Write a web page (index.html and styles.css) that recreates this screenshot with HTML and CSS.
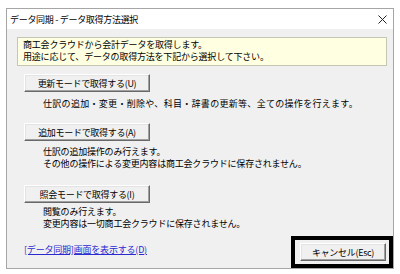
FILE: index.html
```html
<!DOCTYPE html>
<html lang="ja">
<head>
    <meta charset="UTF-8">
    <meta name="viewport" content="width=device-width, initial-scale=1.0">
    <title>データ同期 - データ取得方法選択</title>
    <link rel="stylesheet" href="styles.css">
</head>
<body>
    <div class="window">
        <div class="titlebar">
            <span class="title">データ同期 - データ取得方法選択</span>
            <svg class="close" width="9" height="9" viewBox="0 0 9 9">
                <path d="M0.5 0.5 L8.5 8.5 M8.5 0.5 L0.5 8.5" stroke="#222" stroke-width="1" fill="none"/>
            </svg>
        </div>
        <div class="content">
            <div class="notice">
                商工会クラウドから会計データを取得します。<br>
                用途に応じて、データの取得方法を下記から選択して下さい。
            </div>

            <div class="mode mode-update">
                <button class="win-button mode-button">更新モードで取得する(U)</button>
                <p class="desc">仕訳の追加・変更・削除や、科目・辞書の更新等、全ての操作を行えます。</p>
            </div>

            <div class="mode mode-add">
                <button class="win-button mode-button">追加モードで取得する(A)</button>
                <p class="desc">仕訳の追加操作のみ行えます。<br>その他の操作による変更内容は商工会クラウドに保存されません。</p>
            </div>

            <div class="mode mode-view">
                <button class="win-button mode-button">照会モードで取得する(I)</button>
                <p class="desc">閲覧のみ行えます。<br>変更内容は一切商工会クラウドに保存されません。</p>
            </div>

            <div class="footer">
                <a class="sync-link" href="#">[データ同期]画面を表示する(D)</a>
                <div class="highlight">
                    <button class="win-button cancel-button">キャンセル(Esc)</button>
                </div>
            </div>
        </div>
    </div>
</body>
</html>
```

FILE: styles.css
```css
body {
    margin: 0;
    background-color: #ffffff;
    font-family: "Noto Sans CJK JP", "Noto Sans", sans-serif;
    font-size: 9px;
    color: #000;
}
.window {
    margin: 8px 0 0 6px;
    width: 386px;
    height: 259px;
    border: 1px solid #a6a6a6;
    display: flex;
    flex-direction: column;
    background-color: #f0f0f0;
}
.titlebar {
    height: 20px;
    background-color: #ffffff;
    display: flex;
    align-items: center;
    justify-content: space-between;
    padding: 0 6px 0 3px;
}
.title {
    letter-spacing: -0.3px;
}
.close {
    display: block;
}
.content {
    flex: 1;
    display: flex;
    flex-direction: column;
    padding: 8px 6px 0 10px;
    letter-spacing: -0.2px;
}
.notice {
    height: 24px;
    padding: 1px 0 2px 5px;
    line-height: 12px;
    background-color: #ffffe1;
    border: 1px solid #c6c6b6;
}
.mode {
    margin-left: 7px;
}
.win-button {
    display: block;
    font-family: inherit;
    font-size: 9px;
    letter-spacing: -0.3px;
    color: #000;
    background-color: #f0f0f0;
    border: 1px solid;
    border-color: #ffffff #696969 #696969 #ffffff;
    box-shadow: inset -1px -1px 0 #a0a0a0, inset 1px 1px 0 #e3e3e3;
    padding: 0;
    line-height: 9px;
}
.mode-button {
    width: 126px;
    height: 18px;
}
.mode-update .mode-button {
    margin-top: 8px;
}
.mode-add .mode-button {
    margin-top: 13px;
}
.mode-view .mode-button {
    margin-top: 15px;
}
.desc {
    margin: 0 0 0 19px;
    line-height: 12px;
}
.mode-update .desc {
    margin-top: 6px;
    letter-spacing: 0.3px;
}
.mode-add .desc {
    margin-top: 5px;
}
.mode-view .desc {
    margin-top: 3px;
}
.footer {
    flex: 1;
    display: flex;
    align-items: flex-end;
    justify-content: space-between;
    margin-right: -6px;
}
.sync-link {
    color: #2a2ad0;
    margin: 0 0 12px 7px;
    line-height: 12px;
}
.highlight {
    border: 4px solid #000;
    padding: 3px 3px 3px 5px;
}
.cancel-button {
    width: 86px;
    height: 18px;
}
```
